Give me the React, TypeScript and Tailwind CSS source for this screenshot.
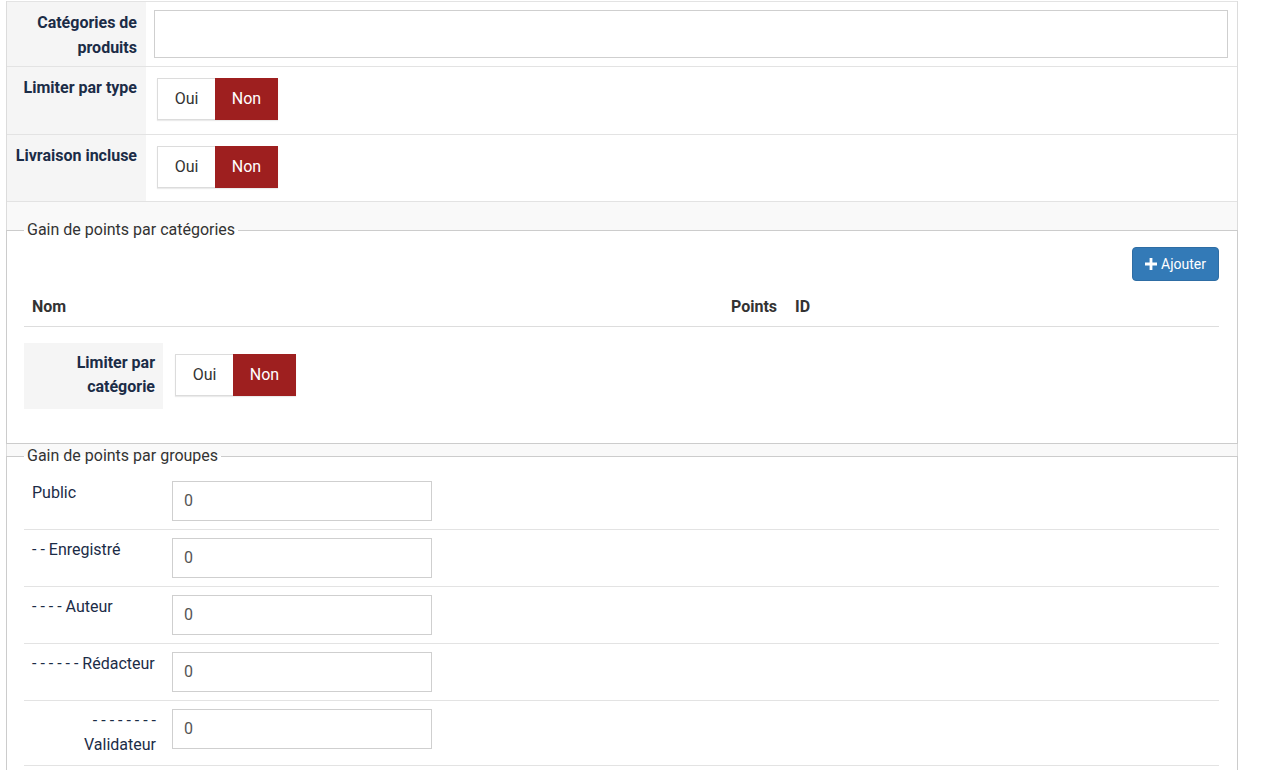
import React from "react";

const navy = "text-[#1b2c47]";

function Toggle() {
  return (
    <div className="flex h-[42px] w-fit shadow-[0_1px_1px_rgba(0,0,0,0.08)]">
      <button className="h-[42px] w-[58px] border border-[#dcdcdc] border-r-0 bg-white text-[16px] text-[#333]">
        Oui
      </button>
      <button className="h-[42px] w-[63px] bg-[#9e1f1f] text-[16px] text-white">Non</button>
    </div>
  );
}

function FormRow({
  label,
  children,
  contentClass,
}: {
  label: React.ReactNode;
  children: React.ReactNode;
  contentClass: string;
}) {
  return (
    <div className="flex border-b border-[#e3e3e3]">
      <div
        className={`w-[139px] shrink-0 bg-[#f5f5f5] pl-2 pr-[9px] pt-[8px] text-right text-[16px] font-bold leading-[25px] ${navy}`}
      >
        {label}
      </div>
      <div className={`flex-1 bg-white ${contentClass}`}>{children}</div>
    </div>
  );
}

const groups: { label: React.ReactNode; right?: boolean }[] = [
  { label: "Public" },
  { label: "- - Enregistré" },
  { label: "- - - - Auteur" },
  { label: "- - - - - - Rédacteur" },
  {
    label: (
      <>
        - - - - - - - -
        <br />
        Validateur
      </>
    ),
    right: true,
  },
];

export default function App() {
  return (
    <div
      className="h-[770px] w-[1274px] overflow-hidden bg-white"
      style={{ fontFamily: "Roboto, 'Noto Sans', Arial, sans-serif" }}
    >
      <div className="ml-[6px] min-h-[770px] w-[1232px] border-x border-[#dcdcdc] bg-[#f9f9f9]">
        {/* top option rows */}
        <div className="mt-[1px] border-t border-[#e3e3e3]">
          <FormRow label={<>Catégories de<br />produits</>} contentClass="pl-2 pr-[9px] pt-[8px] pb-[8px]">
            <div className="h-[48px] w-full border border-[#cfcfcf] bg-white" />
          </FormRow>
          <FormRow label="Limiter par type" contentClass="pl-[11px] pt-[11px] pb-[14px]">
            <Toggle />
          </FormRow>
          <FormRow label="Livraison incluse" contentClass="pl-[11px] pt-[11px] pb-[13px]">
            <Toggle />
          </FormRow>
        </div>

        {/* points per category */}
        <fieldset className="-mx-px mt-[18px] border border-[#cccccc] bg-white pb-[34px] pl-[17px] pr-[18px] pt-[7px]">
          <legend className="px-[3px] text-[16px] leading-[20px] text-[#333]">Gain de points par catégories</legend>
          <div className="flex justify-end">
            <button className="flex h-[34px] w-[87px] items-center justify-center gap-[4px] rounded-[4px] border border-[#2e6da4] bg-[#337ab7] text-[14px] text-white">
              <svg width="12" height="12" viewBox="0 0 12 12" aria-hidden="true">
                <path d="M4.6 0h2.8v4.6H12v2.8H7.4V12H4.6V7.4H0V4.6h4.6z" fill="#fff" />
              </svg>
              Ajouter
            </button>
          </div>
          <div className="mt-[7px] grid grid-cols-[699px_64px_1fr] border-b border-[#dddddd] text-[16px] font-bold leading-[22px] text-[#333]">
            <div className="px-2 py-2">Nom</div>
            <div className="px-2 py-2">Points</div>
            <div className="px-2 py-2">ID</div>
          </div>
          <div className="mt-[16px] flex">
            <div
              className={`h-[66px] w-[139px] bg-[#f5f5f5] pr-[8px] pt-[8px] text-right text-[16px] font-bold leading-[24px] ${navy}`}
            >
              Limiter par
              <br />
              catégorie
            </div>
            <div className="pl-[12px] pt-[11px]">
              <Toggle />
            </div>
          </div>
        </fieldset>

        {/* points per user group */}
        <fieldset className="-mx-px mt-[2px] border border-[#cccccc] bg-white pb-[20px] pl-[17px] pr-[18px] pt-[7px]">
          <legend className="px-[3px] text-[16px] leading-[20px] text-[#333]">Gain de points par groupes</legend>
          {groups.map((g, i) => (
            <div key={i} className="flex border-b border-[#e3e3e3] py-2">
              <div
                className={`w-[140px] shrink-0 whitespace-nowrap px-2 text-[16px] leading-[24px] ${navy} ${
                  g.right ? "text-right" : "text-left"
                }`}
              >
                {g.label}
              </div>
              <div className="pl-2">
                <div className="flex h-[40px] w-[260px] items-center border border-[#cfcfcf] bg-white px-[11px] text-[16px] text-[#555]">
                  0
                </div>
              </div>
            </div>
          ))}
        </fieldset>
      </div>
    </div>
  );
}
